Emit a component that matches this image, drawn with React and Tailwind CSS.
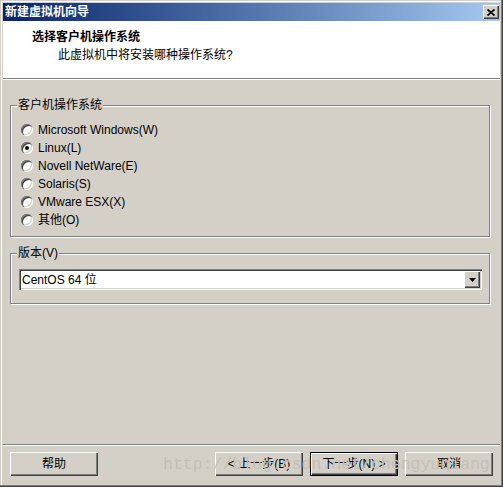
import React from "react";

const osList = [
  { id: "win", label: "Microsoft Windows(W)" },
  { id: "linux", label: "Linux(L)", checked: true },
  { id: "netware", label: "Novell NetWare(E)" },
  { id: "solaris", label: "Solaris(S)" },
  { id: "esx", label: "VMware ESX(X)" },
  { id: "other", label: "其他(O)" },
];

const raised =
  "bg-[#d4d0c8] shadow-[inset_1px_1px_0_#fff,inset_-1px_-1px_0_#404040,inset_-2px_-2px_0_#808080]";

const Radio = ({ label, checked }) => (
  <div className="flex items-center h-[18px]">
    <span className="w-[12px] h-[12px] rounded-full bg-white flex items-center justify-center shadow-[inset_1px_1px_0_#808080,inset_2px_2px_0_#404040,inset_-1px_-1px_0_#fff,inset_-2px_-2px_0_#d4d0c8]">
      {checked && <span className="w-[4px] h-[4px] rounded-full bg-black" />}
    </span>
    <span className="ml-[5px] leading-[16px]">{label}</span>
  </div>
);

// etched group box, legend sits on the top line
const GroupBox = ({ title, className, children }) => (
  <div
    className={
      "relative ml-[7px] w-[480px] border border-[#808080] shadow-[inset_1px_1px_0_#fff,1px_1px_0_#fff] " +
      className
    }
  >
    <span className="absolute left-[6px] top-[-9px] px-[1px] bg-[#d4d0c8] leading-[16px]">
      {title}
    </span>
    {children}
  </div>
);

const Button = ({ children, primary }) => (
  <button
    className={
      primary
        ? "w-[88px] h-[24px] border border-black leading-[16px] text-black " + raised
        : "w-[88px] h-[24px] leading-[16px] text-black " + raised
    }
  >
    {children}
  </button>
);

export default function App() {
  return (
    <div className="relative w-[503px] h-[487px] p-[3px] flex flex-col bg-[#d4d0c8] text-[12px] text-black font-['Liberation_Sans','Noto_Sans_CJK_SC',sans-serif] shadow-[inset_-1px_-1px_0_#404040,inset_-2px_-2px_0_#808080,inset_1px_1px_0_#d4d0c8,inset_2px_2px_0_#fff]">
      {/* title bar */}
      <div className="h-[18px] flex items-center justify-between pl-[2px] pr-[1px] bg-gradient-to-r from-[#0a246a] to-[#a6caf0]">
        <span className="text-white font-bold leading-[16px]">新建虚拟机向导</span>
        <span className={"w-[16px] h-[14px] flex items-center justify-center " + raised}>
          <svg width="8" height="7" viewBox="0 0 8 7">
            <path d="M0.5 0.5 L7.5 6.5 M7.5 0.5 L0.5 6.5" stroke="#000" strokeWidth="1.7" />
          </svg>
        </span>
      </div>

      {/* header */}
      <div className="h-[57px] bg-white pt-[8px]">
        <div className="pl-[29px] font-bold leading-[16px]">选择客户机操作系统</div>
        <div className="pl-[55px] mt-[2px] leading-[16px]">此虚拟机中将安装哪种操作系统?</div>
      </div>
      <div className="h-px bg-[#808080]" />
      <div className="h-px bg-white" />

      {/* body */}
      <div className="flex-1 flex flex-col">
        <GroupBox title="客户机操作系统" className="mt-[25px] h-[132px] pt-[15px] pl-[10px]">
          {osList.map((os) => (
            <Radio key={os.id} label={os.label} checked={os.checked} />
          ))}
        </GroupBox>

        <GroupBox title="版本(V)" className="mt-[16px] h-[51px] pt-[15px] pl-[8px]">
          <div className="w-[463px] h-[21px] flex items-center bg-white pl-[3px] pr-[2px] shadow-[inset_1px_1px_0_#808080,inset_2px_2px_0_#404040,inset_-1px_-1px_0_#fff,inset_-2px_-2px_0_#d4d0c8]">
            <span className="flex-1 leading-[16px]">CentOS 64 位</span>
            <span className={"w-[16px] h-[17px] flex items-center justify-center " + raised}>
              <svg width="7" height="4" viewBox="0 0 7 4">
                <polygon points="0,0 7,0 3.5,4" fill="#000" />
              </svg>
            </span>
          </div>
        </GroupBox>

        <div className="flex-1" />
        <div className="h-px bg-[#808080]" />
        <div className="h-px bg-white" />

        <div className="flex items-center mt-[6px] mb-[8px] px-[7px]">
          <Button>帮助</Button>
          <div className="flex-1" />
          <div className="flex gap-[7px]">
            <Button>&lt; 上一步(B)</Button>
            <Button primary>下一步(N) &gt;</Button>
            <Button>取消</Button>
          </div>
        </div>
      </div>

      {/* blog watermark over the buttons */}
      <span className="absolute left-[163px] top-[455px] pointer-events-none text-[16.5px] leading-[19px] text-[#c3bfb7] font-['Liberation_Mono',monospace]">
        http://blog.csdn.net/chengyuqiang
      </span>
    </div>
  );
}
